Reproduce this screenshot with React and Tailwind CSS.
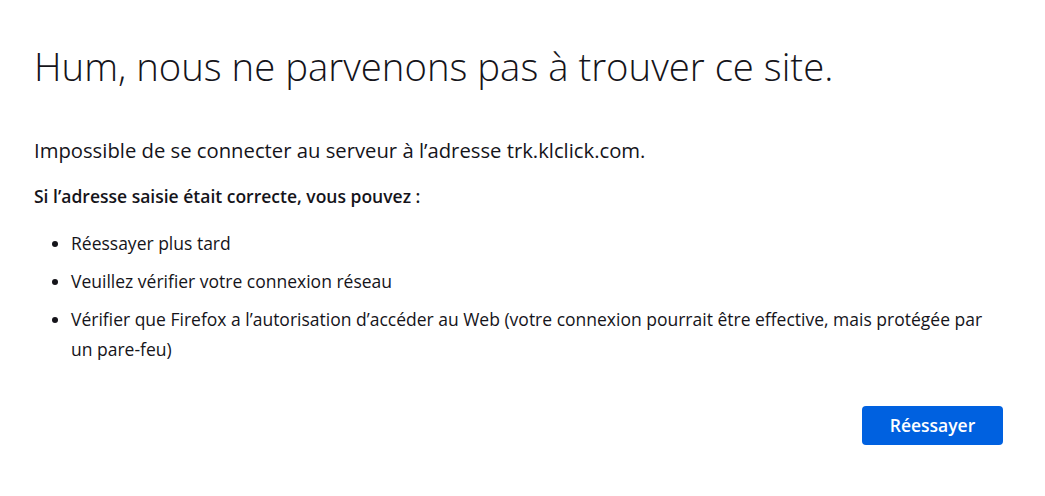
import React from 'react';

function ErrorPage() {
    const tips = [
        'Réessayer plus tard',
        'Veuillez vérifier votre connexion réseau',
        'Vérifier que Firefox a l’autorisation d’accéder au Web (votre connexion pourrait être effective, mais protégée par un pare-feu)',
    ];

    return (
        <div className="min-h-screen bg-white text-[#15141a] font-['Open_Sans','Noto_Sans',sans-serif]">
            <div className="w-[1003px] pl-[34px] pt-[40px]">
                <h1 className="text-[38.3px] font-light leading-[52px]">
                    Hum, nous ne parvenons pas à trouver ce site.
                </h1>
                <p className="mt-[44px] text-[20.25px] leading-[28px]">
                    Impossible de se connecter au serveur à l’adresse trk.klclick.com.
                </p>
                <p className="mt-[19px] text-[17.5px] font-semibold leading-[26px]">
                    Si l’adresse saisie était correcte, vous pouvez :
                </p>
                <ul className="mt-[19px] list-disc space-y-[8px] pl-[37px] text-[17.5px] leading-[30px]">
                    {tips.map((tip) => (
                        <li key={tip}>{tip}</li>
                    ))}
                </ul>
                <div className="mt-[42px] flex justify-end">
                    <button className="h-[39px] w-[141px] rounded-[4px] bg-[#0061e0] text-[17.5px] font-semibold text-white">
                        Réessayer
                    </button>
                </div>
            </div>
        </div>
    );
}

export default function App() {
    return <ErrorPage />;
}
